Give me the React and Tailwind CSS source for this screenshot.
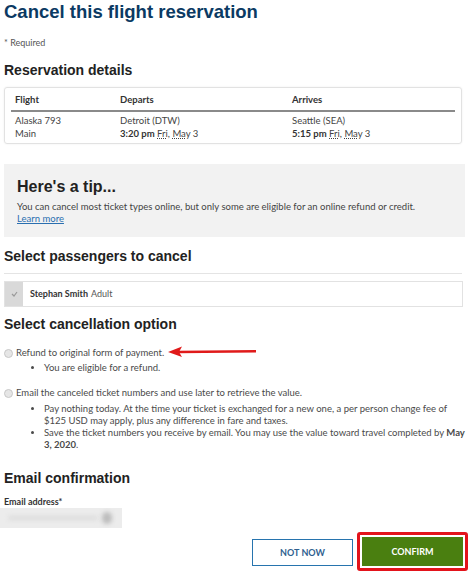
import React from "react";

const body = { fontFamily: "Lato, 'Open Sans', sans-serif" };

function Radio() {
  return (
    <span className="inline-block w-[9px] h-[9px] rounded-full border border-[#c8c8c8] bg-[#e6e6e6] mr-[3px] shrink-0" />
  );
}

export default function App() {
  return (
    <div className="w-[474px] h-[574px] bg-white overflow-hidden text-[#333]" style={body}>
      <div className="pl-[4px] pr-[6px]">
        <h1 className="font-['Liberation_Sans',Arial,sans-serif] font-bold text-[18.5px] leading-[24px] text-[#0b3a63]">
          Cancel this flight reservation
        </h1>
        <div className="text-[9px] text-[#555] mt-[13px] leading-[12px]">* Required</div>
        <h2 className="font-['Liberation_Sans',Arial,sans-serif] font-bold text-[14px] leading-[18px] text-[#222] mt-[12px]">
          Reservation details
        </h2>
        <div className="mt-[8px] w-[458px] border border-[#e2e2e2] rounded-[3px] shadow-[0_0_2px_rgba(0,0,0,0.08)] px-[6px] pt-[6px] pb-[3px] text-[9.5px]">
          <div className="flex font-bold text-[#333] leading-[12px] pb-[4px] border-b-2 border-[#8a8a8a] pl-[4px]">
            <div className="w-[105px]">Flight</div>
            <div className="w-[172px]">Departs</div>
            <div>Arrives</div>
          </div>
          <div className="flex pl-[4px] pt-[2px] leading-[13px] text-[#444]">
            <div className="w-[105px]">
              <div>Alaska 793</div>
              <div>Main</div>
            </div>
            <div className="w-[172px]">
              <div>Detroit (DTW)</div>
              <div>
                <span className="font-bold text-[#333]">3:20 pm</span>{" "}
                <span className="underline decoration-dotted">Fri</span>,{" "}
                <span className="underline decoration-dotted">May</span> 3
              </div>
            </div>
            <div>
              <div>Seattle (SEA)</div>
              <div>
                <span className="font-bold text-[#333]">5:15 pm</span>{" "}
                <span className="underline decoration-dotted">Fri</span>,{" "}
                <span className="underline decoration-dotted">May</span> 3
              </div>
            </div>
          </div>
        </div>

        <div className="mt-[20px] bg-[#f2f2f2] pl-[13px] pr-[8px] pt-[13px] pb-[12px] w-[461px]">
          <div className="font-['Liberation_Sans',Arial,sans-serif] font-bold text-[16px] leading-[20px] text-[#222]">
            Here's a tip...
          </div>
          <div className="text-[9.5px] leading-[12px] text-[#444] mt-[4px]">
            You can cancel most ticket types online, but only some are eligible for an online refund or credit.
          </div>
          <div className="text-[9.5px] leading-[12px] text-[#2a6fb0] underline">Learn more</div>
        </div>

        <h2 className="font-['Liberation_Sans',Arial,sans-serif] font-bold text-[14px] leading-[18px] text-[#222] mt-[10px]">
          Select passengers to cancel
        </h2>
        <div className="mt-[8px] w-[458px] border-t border-[#e4e4e4]" />
        <div className="mt-[7px] w-[459px] flex border border-[#e2e2e2] h-[26px] items-stretch">
          <div className="w-[18px] bg-[#d9d9d9] flex items-center justify-center">
            <svg width="7" height="6" viewBox="0 0 7 6">
              <path d="M1 3 L3 5 L6 1" stroke="#9a9a9a" strokeWidth="1.2" fill="none" />
            </svg>
          </div>
          <div className="flex items-center pl-[7px] text-[9px] text-[#333]">
            <span className="font-bold">Stephan Smith</span>
            <span className="ml-[3px] text-[#555]">Adult</span>
          </div>
        </div>

        <h2 className="font-['Liberation_Sans',Arial,sans-serif] font-bold text-[14px] leading-[18px] text-[#222] mt-[8px]">
          Select cancellation option
        </h2>

        <div className="mt-[14px] text-[9.5px] leading-[12px] text-[#4a4a4a]">
          <div className="flex items-center relative">
            <Radio />
            <span>Refund to original form of payment.</span>
            <svg className="absolute left-[162px] top-[-3px]" width="92" height="16" viewBox="0 0 92 16">
              <path d="M12 8 L90 7.2" stroke="#e01a1a" strokeWidth="2.4" fill="none" />
              <path d="M2 8 L16 2.5 L13 8 L16 13 Z" fill="#e01a1a" />
            </svg>
          </div>
          <ul className="mt-[3px] pl-[40px] list-disc">
            <li>You are eligible for a refund.</li>
          </ul>
          <div className="flex items-center mt-[13px]">
            <Radio />
            <span>Email the canceled ticket numbers and use later to retrieve the value.</span>
          </div>
          <ul className="mt-[4px] pl-[40px] list-disc">
            <li>
              Pay nothing today. At the time your ticket is exchanged for a new one, a per person change fee of
              $125 USD may apply, plus any difference in fare and taxes.
            </li>
            <li>
              Save the ticket numbers you receive by email. You may use the value toward travel completed by{" "}
              <span className="font-bold">May</span> <span className="font-bold">3, 2020</span>.
            </li>
          </ul>
        </div>

        <h2 className="font-['Liberation_Sans',Arial,sans-serif] font-bold text-[14px] leading-[18px] text-[#222] mt-[18px]">
          Email confirmation
        </h2>
        <div className="mt-[9px] text-[9px] font-bold text-[#333] leading-[11px]">
          Email address<span className="text-[#333]">*</span>
        </div>
      </div>
      <div className="mt-[1px] w-[122px] h-[20px] bg-[#ececec] relative overflow-hidden">
        <div className="absolute left-[8px] top-[8px] w-[90px] h-[4px] rounded-full bg-[#dcdcdc] blur-[2px]" />
        <div className="absolute left-[102px] top-[4px] w-[10px] h-[12px] rounded-full bg-[#bdbdbd] blur-[2px]" />
      </div>
      <div className="flex justify-end pr-[6px] mt-[4px] gap-[4px]">
        <div className="mt-[7px] w-[101px] h-[27px] border border-[#2774ae] flex items-center justify-center text-[9px] font-bold text-[#2f5f8f]">
          NOT NOW
        </div>
        <div className="w-[111px] h-[39px] border-[3px] border-[#e3131b] rounded-[3px] p-[2px] flex">
          <div className="flex-1 bg-[#4a7f10] flex items-center justify-center text-[9px] font-bold text-white">
            CONFIRM
          </div>
        </div>
      </div>
    </div>
  );
}
